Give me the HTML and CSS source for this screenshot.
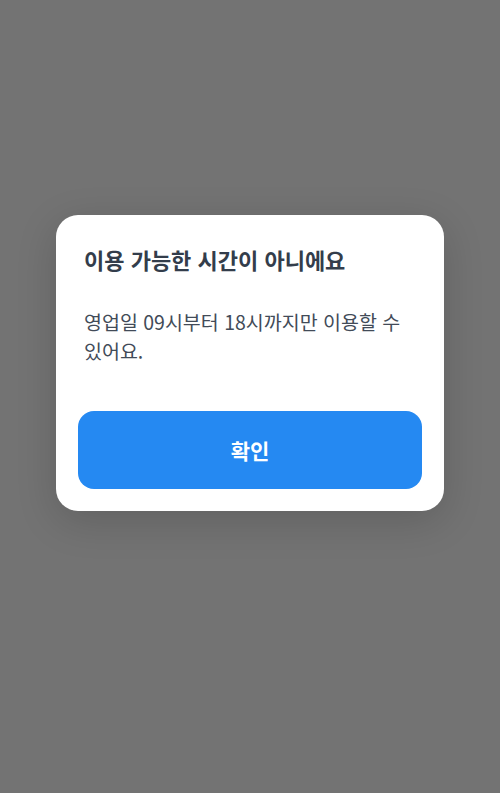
FILE: index.html
```html
<!DOCTYPE html>
<html lang="ko">
<head>
    <meta charset="UTF-8">
    <meta name="viewport" content="width=device-width, initial-scale=1.0">
    <title>이용 가능한 시간이 아니에요</title>
    <link rel="stylesheet" href="styles.css">
</head>
<body>

    <div class="overlay">
        <div class="dialog">
            <div class="dialog-text">
                <h2 class="dialog-title">이용 가능한 시간이 아니에요</h2>
                <p class="dialog-desc">영업일 09시부터 18시까지만 이용할 수 있어요.</p>
            </div>
            <button class="confirm-btn">확인</button>
        </div>
    </div>

</body>
</html>
```

FILE: styles.css
```css
body {
    margin: 0;
    font-family: "Noto Sans CJK KR", "Noto Sans", sans-serif;
    background-color: #737373;
}
.overlay {
    height: 793px;
    box-sizing: border-box;
    padding-top: 215px;
    display: flex;
    justify-content: center;
    align-items: flex-start;
}
.dialog {
    width: 388px;
    box-sizing: border-box;
    padding: 28px 22px 22px;
    background-color: #fff;
    border-radius: 22px;
    box-shadow: 0 10px 40px rgba(0, 0, 0, 0.16);
}
.dialog-text {
    padding: 0 6px;
}
.dialog-title {
    margin: 0;
    font-size: 22px;
    line-height: 32px;
    font-weight: 700;
    color: #333d4b;
}
.dialog-desc {
    margin: 32px 0 0;
    font-size: 19.5px;
    line-height: 29px;
    color: #424b58;
}
.confirm-btn {
    display: block;
    width: 100%;
    height: 78px;
    margin-top: 46px;
    font-family: inherit;
    font-size: 21px;
    font-weight: 700;
    color: #fff;
    background-color: #2589f2;
    border: none;
    border-radius: 16px;
}
```
